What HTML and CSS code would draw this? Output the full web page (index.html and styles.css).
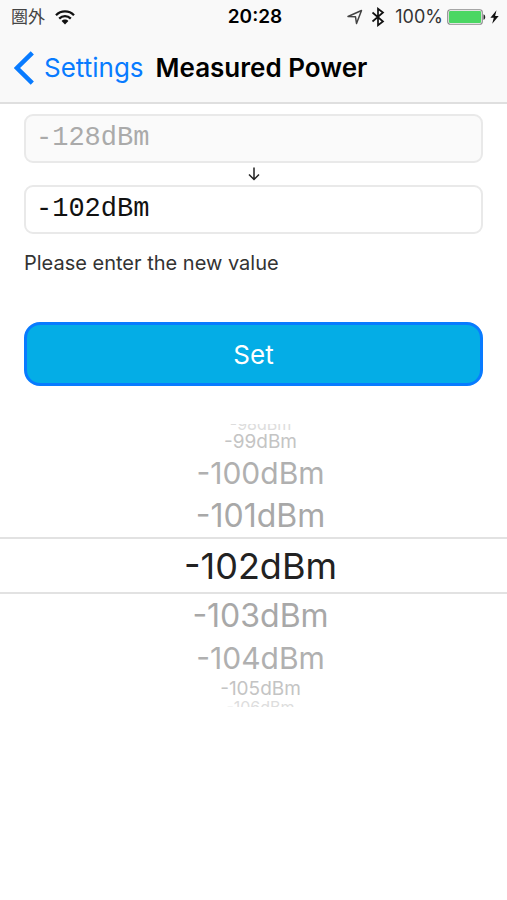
FILE: index.html
```html
<!DOCTYPE html>
<html lang="en">
<head>
  <meta charset="utf-8">
  <meta name="viewport" content="width=device-width, initial-scale=1">
  <title>Measured Power</title>
  <link rel="stylesheet" href="styles.css">
</head>
<body>
  <header class="header">
    <div class="status">
      <div class="status-left">
        <span class="carrier" lang="ja">圏外</span>
        <svg class="wifi" viewBox="0 0 20 15" width="20" height="15" aria-hidden="true">
          <g fill="none" stroke="#111" stroke-width="2.3">
            <path d="M1 5.2C6 .2 14 .2 19 5.2"/>
            <path d="M4.2 8.6c3.3-3.3 8.3-3.3 11.6 0"/>
          </g>
          <path d="M6.6 11c2-1.9 4.8-1.9 6.8 0L10 14.4z" fill="#111"/>
        </svg>
      </div>
      <time class="clock">20:28</time>
      <div class="status-right">
        <svg class="location" viewBox="0 0 16 16" width="16" height="16" aria-hidden="true">
          <path d="M1 7.5 14.500 1.500 9.500 14.500 8.500 7.800z" fill="none" stroke="#444" stroke-width="1.500" stroke-linejoin="round"/>
        </svg>
        <svg class="bluetooth" viewBox="0 0 14 20" width="14" height="20" aria-hidden="true">
          <path d="M1.500 5.500 12 14.500 7 18.300V1.700L12 5.500 1.500 14.500" fill="none" stroke="#111" stroke-width="1.700"/>
        </svg>
        <span class="percent">100%</span>
        <svg class="battery" viewBox="0 0 39 16" width="39" height="16" aria-hidden="true">
          <rect x=".75" y=".75" width="34.500" height="14.500" rx="2.500" fill="#fff" stroke="#8b8b8b" stroke-width="1.200"/>
          <rect x="2" y="2" width="32" height="12" rx="1" fill="#4bd763"/>
          <path d="M36.500 5.200c2.300.6 2.300 5 0 5.600z" fill="#222"/>
        </svg>
        <svg class="bolt" viewBox="0 0 9 14" width="9" height="14" aria-hidden="true">
          <path d="M6.500.3.4 7.800h3.400L2.200 13.700 8.700 5.900H5.100z" fill="#111"/>
        </svg>
      </div>
    </div>
    <nav class="nav">
      <a class="back" href="#settings">
        <svg viewBox="0 0 20 34" width="20" height="34" aria-hidden="true">
          <path d="M18.300 1.800 3 17l15.300 15.200" fill="none" stroke="#087bff" stroke-width="4.500"/>
        </svg>
        <span>Settings</span>
      </a>
      <h1 class="title">Measured Power</h1>
    </nav>
  </header>

  <main>
    <form class="form">
      <input class="field" type="text" value="-128dBm" aria-label="Current value" disabled>
      <svg class="arrow" viewBox="0 0 12 14" width="12" height="14" aria-hidden="true">
        <path d="M6 .5V12.500M1 7.500l5 5 5-5" fill="none" stroke="#222" stroke-width="1.500"/>
      </svg>
      <input class="field" id="new-value" type="text" value="-102dBm">
      <label class="hint" for="new-value">Please enter the new value</label>
      <button class="set" type="button">Set</button>
    </form>

    <ul class="picker" role="listbox" aria-label="Measured power">
      <li class="row edge edge-top" role="option">-98dBm</li>
      <li class="row far" role="option">-99dBm</li>
      <li class="row mid" role="option">-100dBm</li>
      <li class="row near" role="option">-101dBm</li>
      <li class="row selected" role="option" aria-selected="true">-102dBm</li>
      <li class="row near" role="option">-103dBm</li>
      <li class="row mid" role="option">-104dBm</li>
      <li class="row far" role="option">-105dBm</li>
      <li class="row edge edge-bottom" role="option">-106dBm</li>
    </ul>
  </main>
</body>
</html>
```
FILE: styles.css
```css
* {
  box-sizing: border-box;
}

body {
  margin: 0;
  background: #fff;
  color: #000;
  font-family: Inter, "Noto Sans CJK JP", sans-serif;
}

.header {
  background: #f9f9f9;
  border-bottom: 2px solid #dfdfdf;
}

.status {
  display: grid;
  grid-template-columns: 1fr auto 1fr;
  align-items: center;
  height: 34px;
  padding: 0 8px 0 11px;
}

.status-left,
.status-right {
  display: flex;
  align-items: center;
}

.status-left {
  gap: 10px;
}

.status-right {
  justify-content: flex-end;
}

.carrier {
  color: #444;
  font-size: 17px;
  line-height: 24px;
}

.clock {
  font-size: 19px;
  font-weight: 600;
  line-height: 24px;
}

.bluetooth {
  margin: 0 10px 0 8px;
}

.percent {
  margin-right: 4px;
  color: #333;
  font-size: 18px;
  line-height: 24px;
}

.bolt {
  margin-left: 4px;
}

.nav {
  display: flex;
  align-items: center;
  gap: 12px;
  height: 68px;
  padding: 0 14px;
}

.back {
  display: flex;
  align-items: center;
  gap: 10px;
  color: #087bff;
  font-size: 26px;
  line-height: 32px;
  text-decoration: none;
}

.title {
  margin: 0;
  font-size: 26px;
  font-weight: 600;
  line-height: 32px;
}

.form {
  display: flex;
  flex-direction: column;
  padding: 10px 24px 0;
}

.field {
  width: 100%;
  height: 49px;
  padding: 0 10px 2px;
  border: 2px solid #e9e9e9;
  border-radius: 9px;
  background: #fff;
  color: #111;
  font-family: "Liberation Mono", monospace;
  font-size: 27px;
}

.field:disabled {
  background: #fafafa;
  color: #aaa;
}

.arrow {
  align-self: center;
  margin: 4px 0;
}

.hint {
  margin-top: 15px;
  color: #333;
  font-size: 20px;
  line-height: 28px;
}

.set {
  height: 64px;
  margin-top: 45px;
  border: 3px solid #087bff;
  border-radius: 16px;
  background: #04ade6;
  color: #fff;
  font-family: inherit;
  font-size: 26px;
}

.picker {
  margin: 38px 0 0;
  padding: 0;
  list-style: none;
}

.row {
  display: flex;
  align-items: center;
  justify-content: center;
  padding-left: 14px;
  overflow: hidden;
}

.edge {
  height: 8px;
  color: #ddd;
  font-size: 16px;
  line-height: 16px;
}

.edge-top {
  align-items: flex-end;
}

.edge-bottom {
  align-items: flex-start;
}

.far {
  height: 20px;
  color: #c4c4c4;
  font-size: 19px;
  line-height: 20px;
}

.mid {
  height: 42px;
  color: #b0b0b0;
  font-size: 30px;
}

.near {
  height: 43px;
  color: #a8a8a8;
  font-size: 32px;
}

.selected {
  height: 57px;
  border-top: 2px solid #e2e2e2;
  border-bottom: 2px solid #e2e2e2;
  color: #222;
  font-size: 36px;
}
```
